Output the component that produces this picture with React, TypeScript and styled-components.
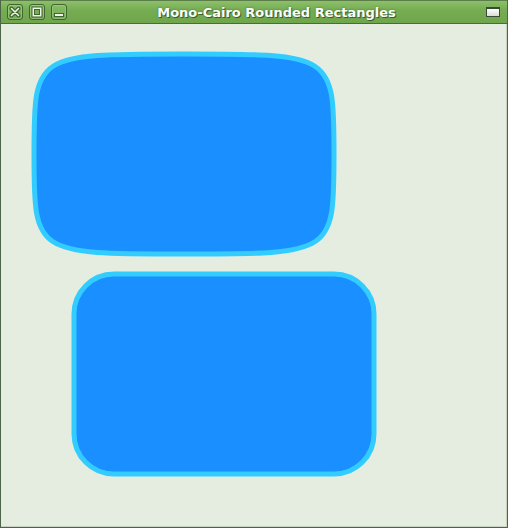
import styled, { createGlobalStyle } from 'styled-components'

const GlobalStyle = createGlobalStyle`
  html, body {
    margin: 0;
    padding: 0;
    background: #e5ede1;
  }
`

const Window = styled.div`
  width: 508px;
  height: 528px;
  box-sizing: border-box;
  display: flex;
  flex-direction: column;
  border: 1px solid #4e6449;
  border-top: none;
  background: #e5ede1;
  overflow: hidden;
`

const TitleBar = styled.div`
  height: 23px;
  display: flex;
  align-items: center;
  padding: 0 6px;
  gap: 6px;
  background: linear-gradient(#8cc06a, #76ad53 40%, #6fa64c);
  border-bottom: 1px solid #4b6a3d;
  border-top: 1px solid #5c7f4a;
  box-sizing: border-box;
  height: 24px;
`

const FrameButton = styled.div`
  width: 16px;
  height: 16px;
  box-sizing: border-box;
  border: 1px solid #3f6530;
  border-radius: 3px;
  background: linear-gradient(#86bc63, #74aa52);
  box-shadow: inset 0 0 0 1px rgba(255, 255, 255, 0.18);
  display: flex;
  align-items: center;
  justify-content: center;
`

const Title = styled.div`
  flex: 1;
  text-align: center;
  font-family: 'DejaVu Sans', sans-serif;
  font-weight: bold;
  font-size: 13px;
  color: #fbfdf8;
  text-shadow: 1px 1px 0 #3d5f2e, 0 0 2px rgba(40, 70, 30, 0.6);
  white-space: nowrap;
`

const MaximizeBox = styled.div`
  width: 14px;
  height: 10px;
  box-sizing: border-box;
  border: 1px solid #3b4a38;
  border-top-width: 2px;
  background: linear-gradient(#ffffff, #d8dcd6);
  margin-right: 1px;
`

const Canvas = styled.div`
  flex: 1;
  display: flex;
  box-shadow: inset -1px -1px 0 #c6d3c1;
`

const Drawing = styled.svg`
  display: block;
  flex: 1;
`

function CloseIcon() {
  return (
    <svg width="12" height="12" viewBox="0 0 12 12">
      <path d="M2.5 2.5 L9.5 9.5 M9.5 2.5 L2.5 9.5" stroke="#3f6530" strokeWidth="4" strokeLinecap="round" />
      <path d="M2.5 2.5 L9.5 9.5 M9.5 2.5 L2.5 9.5" stroke="#eef4e8" strokeWidth="1.6" strokeLinecap="round" />
    </svg>
  )
}

function RestoreIcon() {
  return (
    <svg width="12" height="12" viewBox="0 0 12 12">
      <rect x="1" y="1" width="10" height="10" fill="#eef4e8" stroke="#3f6530" strokeWidth="1" />
      <rect x="3.5" y="3.5" width="5" height="5" fill="#76ad53" stroke="#3f6530" strokeWidth="1" />
    </svg>
  )
}

function MinimizeIcon() {
  return (
    <svg width="12" height="12" viewBox="0 0 12 12">
      <rect x="1.5" y="7.5" width="9" height="3" fill="#eef4e8" stroke="#3f6530" strokeWidth="1" />
    </svg>
  )
}

const fill = '#1a8fff'
const stroke = '#33ccff'

function App() {
  return (
    <>
      <GlobalStyle />
      <Window>
        <TitleBar>
          <FrameButton>
            <CloseIcon />
          </FrameButton>
          <FrameButton>
            <RestoreIcon />
          </FrameButton>
          <FrameButton>
            <MinimizeIcon />
          </FrameButton>
          <Title>Mono-Cairo Rounded Rectangles</Title>
          <MaximizeBox />
        </TitleBar>
        <Canvas>
          <Drawing viewBox="-3 0 506 503" width="506" height="503">
            <path
              d="M30 130 C30 30 30 30 180 30 C330 30 330 30 330 130 C330 230 330 230 180 230 C30 230 30 230 30 130 Z"
              fill={fill}
              stroke={stroke}
              strokeWidth="5"
            />
            <rect x="70" y="250" width="300" height="200" rx="40" fill={fill} stroke={stroke} strokeWidth="5" />
          </Drawing>
        </Canvas>
      </Window>
    </>
  )
}

export default App
